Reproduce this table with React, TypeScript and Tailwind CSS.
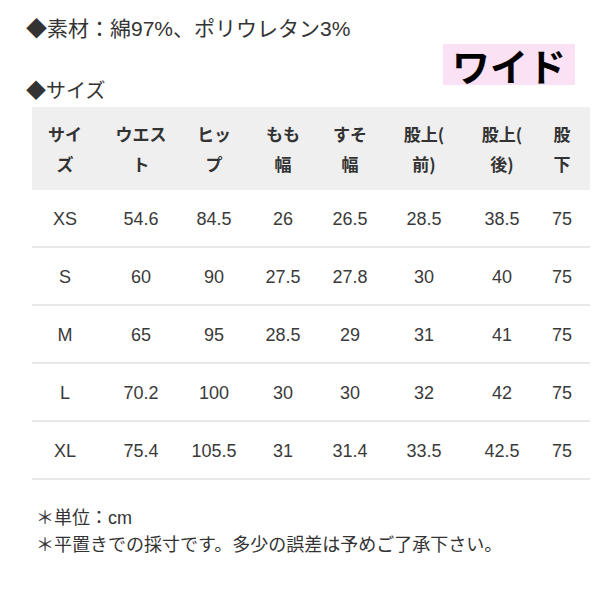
import React from 'react';

interface SizeRow {
  size: string;
  values: string[];
}

const headers: [string, string][] = [
  ['サイ', 'ズ'],
  ['ウエス', 'ト'],
  ['ヒッ', 'プ'],
  ['もも', '幅'],
  ['すそ', '幅'],
  ['股上(', '前)'],
  ['股上(', '後)'],
  ['股', '下'],
];

const rows: SizeRow[] = [
  { size: 'XS', values: ['54.6', '84.5', '26', '26.5', '28.5', '38.5', '75'] },
  { size: 'S', values: ['60', '90', '27.5', '27.8', '30', '40', '75'] },
  { size: 'M', values: ['65', '95', '28.5', '29', '31', '41', '75'] },
  { size: 'L', values: ['70.2', '100', '30', '30', '32', '42', '75'] },
  { size: 'XL', values: ['75.4', '105.5', '31', '31.4', '33.5', '42.5', '75'] },
];

const cols = 'grid grid-cols-[66px_86px_60px_78px_56px_92px_64px_56px]';

export default function App() {
  return (
    <div className="w-[600px] h-[597px] bg-white text-[#333] font-['Liberation_Sans','Noto_Sans_CJK_JP',sans-serif]">
      <div className="pt-[15px] pl-[26px] h-[44px] text-[21px] leading-[28px]">◆素材：綿97%、ポリウレタン3%</div>

      <div className="flex h-[63px]">
        <div className="self-end pl-[26px] text-[20px] leading-[24px] mb-[4px]">◆サイズ</div>
        <div className="ml-auto mr-[25px] self-start w-[132px] h-[41px] bg-[#fae1f3] flex items-center justify-center text-[38px] font-bold text-black leading-none font-['Noto_Sans_CJK_JP',sans-serif]">
          ワイド
        </div>
      </div>

      <div className="ml-[32px] w-[558px]">
        <div className={`${cols} h-[83px] items-center bg-[#efefef] text-[17px] leading-[30px] font-bold font-['Noto_Sans_CJK_JP',sans-serif]`}>
          {headers.map(([a, b], i) => (
            <div key={i} className="text-center">
              {a}
              <br />
              {b}
            </div>
          ))}
        </div>
        {rows.map((row) => (
          <div
            key={row.size}
            className={`${cols} h-[58px] items-center pt-[2px] border-b-2 border-[#e8e8e8] text-[18px] text-[#3a3a3a]`}
          >
            <div className="text-center">{row.size}</div>
            {row.values.map((v, i) => (
              <div key={i} className="text-center">
                {v}
              </div>
            ))}
          </div>
        ))}
      </div>

      <div className="mt-[25px] pl-[36px] text-[18px] leading-[27px]">
        <div>＊単位：cm</div>
        <div>＊平置きでの採寸です。多少の誤差は予めご了承下さい。</div>
      </div>
    </div>
  );
}
